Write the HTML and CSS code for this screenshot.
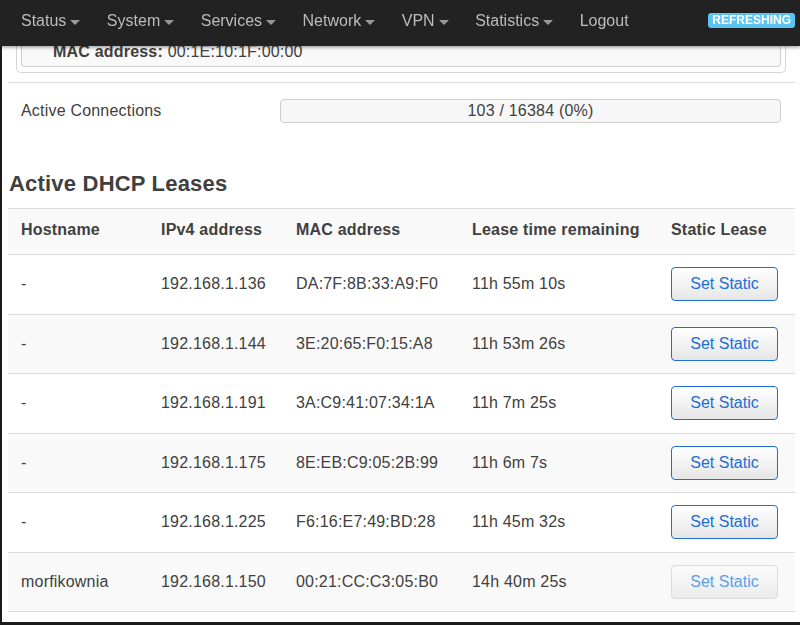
FILE: index.html
```html
<!DOCTYPE html>
<html>
<head>
<meta charset="utf-8">
<title>DHCP Leases</title>
<link rel="stylesheet" href="styles.css">
</head>
<body>
<header class="navbar">
  <ul class="nav">
    <li class="nav-item">Status<span class="caret"></span></li>
    <li class="nav-item">System<span class="caret"></span></li>
    <li class="nav-item">Services<span class="caret"></span></li>
    <li class="nav-item">Network<span class="caret"></span></li>
    <li class="nav-item">VPN<span class="caret"></span></li>
    <li class="nav-item">Statistics<span class="caret"></span></li>
    <li class="nav-item">Logout</li>
  </ul>
  <span class="badge">REFRESHING</span>
</header>
<div class="page">
  <main class="main">
    <div class="outer-box">
      <div class="inner-box">
        <div class="line"><strong>MAC address:</strong> 00:1E:10:1F:00:00</div>
      </div>
    </div>
    <hr class="sep">
    <div class="conn-row">
      <div class="conn-label">Active Connections</div>
      <div class="progress">103 / 16384 (0%)</div>
    </div>
    <h2 class="title">Active DHCP Leases</h2>
    <table class="leases">
      <colgroup>
        <col class="c1"><col class="c2"><col class="c3"><col class="c4"><col class="c5">
      </colgroup>
      <thead>
        <tr><th>Hostname</th><th>IPv4 address</th><th>MAC address</th><th>Lease time remaining</th><th>Static Lease</th></tr>
      </thead>
      <tbody>
        <tr><td>-</td><td>192.168.1.136</td><td>DA:7F:8B:33:A9:F0</td><td>11h 55m 10s</td><td><button class="btn">Set Static</button></td></tr>
        <tr><td>-</td><td>192.168.1.144</td><td>3E:20:65:F0:15:A8</td><td>11h 53m 26s</td><td><button class="btn">Set Static</button></td></tr>
        <tr><td>-</td><td>192.168.1.191</td><td>3A:C9:41:07:34:1A</td><td>11h 7m 25s</td><td><button class="btn">Set Static</button></td></tr>
        <tr><td>-</td><td>192.168.1.175</td><td>8E:EB:C9:05:2B:99</td><td>11h 6m 7s</td><td><button class="btn">Set Static</button></td></tr>
        <tr><td>-</td><td>192.168.1.225</td><td>F6:16:E7:49:BD:28</td><td>11h 45m 32s</td><td><button class="btn">Set Static</button></td></tr>
        <tr><td>morfikownia</td><td>192.168.1.150</td><td>00:21:CC:C3:05:B0</td><td>14h 40m 25s</td><td><button class="btn btn-disabled" disabled>Set Static</button></td></tr>
      </tbody>
    </table>
  </main>
</div>
</body>
</html>
```

FILE: styles.css
```css
html, body {
  margin: 0;
  padding: 0;
  background: #fff;
}
body {
  font-family: "Liberation Sans", Arial, sans-serif;
  font-size: 16px;
  line-height: 20px;
  color: #404040;
}
.navbar {
  position: fixed;
  top: 0;
  left: 0;
  right: 0;
  height: 46px;
  background: #222;
  display: flex;
  align-items: flex-start;
  box-shadow: 0 1px 4px rgba(0, 0, 0, 0.45);
  z-index: 10;
}
.nav {
  list-style: none;
  margin: 0;
  padding: 10.5px 0 0 7.75px;
  display: flex;
}
.nav-item {
  padding: 0 13.25px;
  color: #bbb;
  white-space: nowrap;
}
.caret {
  display: inline-block;
  width: 0;
  height: 0;
  margin-left: 4px;
  vertical-align: 1px;
  border-top: 5px solid #999;
  border-left: 5px solid transparent;
  border-right: 5px solid transparent;
}
.badge {
  margin: 13px 5px 0 auto;
  padding: 0 4px;
  background: #5bc4ee;
  color: #fff;
  font-weight: bold;
  font-size: 12px;
  line-height: 15px;
  border-radius: 3px;
}
.page {
  height: 625px;
  box-sizing: border-box;
  border-left: 2px solid #1b1b1b;
  border-bottom: 3px solid #1b1b1b;
  overflow: hidden;
}
.main {
  padding: 42px 5px 0 6px;
  letter-spacing: 0.2px;
}
.outer-box {
  margin: 0 9px 0 8px;
  padding: 0 4px 5px;
  border: 1px solid #d6d6d6;
  border-top: none;
  border-radius: 0 0 5px 5px;
}
.inner-box {
  padding: 0 31px 4px;
  border: 1px solid #cfcfcf;
  border-top: none;
  border-radius: 0 0 4px 4px;
  background: #f9f9f9;
}
.sep {
  margin: 9px 0 0;
  border: none;
  border-top: 1px solid #ddd;
  height: 0;
}
.conn-row {
  display: flex;
  align-items: center;
  padding: 16px 14px 0 13px;
}
.conn-label {
  width: 259px;
}
.progress {
  flex: 1;
  height: 24px;
  line-height: 22px;
  box-sizing: border-box;
  border: 1px solid #ccc;
  border-radius: 4px;
  background: #f7f7f7;
  text-align: center;
}
.title {
  margin: 48px 0 11px 1px;
  font-size: 22px;
  line-height: 26px;
  font-weight: bold;
  color: #404040;
}
.leases {
  width: 787px;
  table-layout: fixed;
  border-collapse: separate;
  border-spacing: 0;
}
.c1 { width: 140px; }
.c2 { width: 135px; }
.c3 { width: 176px; }
.c4 { width: 199px; }
.c5 { width: 137px; }
.leases th {
  text-align: left;
  font-weight: bold;
  padding: 11px 13px 14px;
  background: #f9f9f9;
  border-top: 1px solid #ddd;
  white-space: nowrap;
}
.leases td {
  padding: 12.25px 13px;
  border-top: 1px solid #ddd;
  vertical-align: middle;
  white-space: nowrap;
}
.leases tbody tr:nth-child(even) td {
  background: #f9f9f9;
}
.leases tbody tr:last-child td {
  border-bottom: 1px solid #ddd;
}
.btn {
  display: inline-block;
  box-sizing: border-box;
  width: 107px;
  height: 34px;
  padding: 6px 0;
  font-family: "Liberation Sans", Arial, sans-serif;
  font-size: 16px;
  line-height: 20px;
  letter-spacing: normal;
  color: #1a6ed8;
  border: 1px solid #1f6fd2;
  border-radius: 4px;
  background: linear-gradient(#ffffff, #e6e6e6);
  vertical-align: middle;
}
.btn-disabled {
  color: #5d9fe8;
  border-color: #dcdcdc;
  background: linear-gradient(#fbfbfb, #ececec);
}
```
